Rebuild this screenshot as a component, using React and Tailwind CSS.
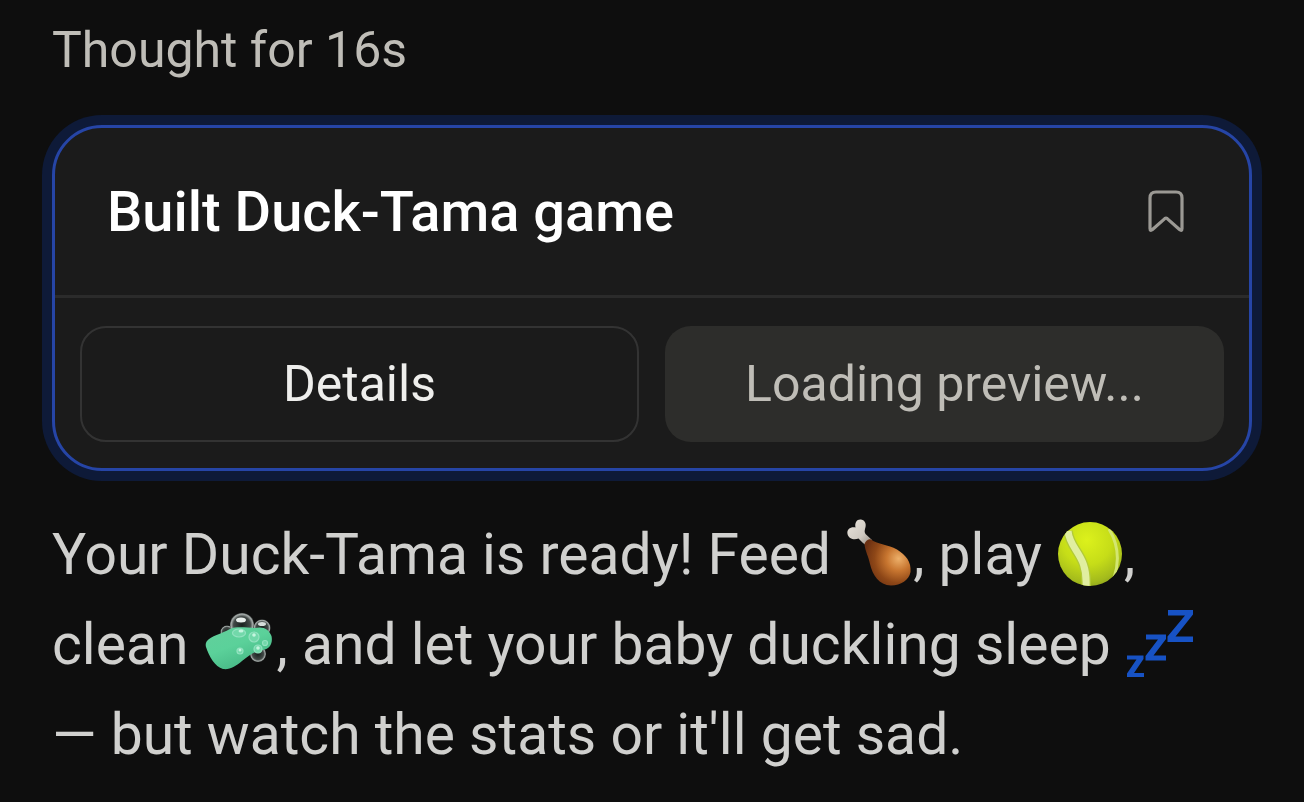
import React from "react";

function PoultryLeg() {
  return (
    <svg role="img" aria-label="Poultry leg" viewBox="0 0 68 70" className="inline-block h-[70px] w-[68px] align-[-14px]">
      <defs>
        <radialGradient id="meat" cx="0.74" cy="0.42" r="0.75">
          <stop offset="0" stopColor="#edb06a" />
          <stop offset="0.35" stopColor="#c87630" />
          <stop offset="0.7" stopColor="#8e4717" />
          <stop offset="1" stopColor="#6b3012" />
        </radialGradient>
        <linearGradient id="bone" x1="0" y1="0" x2="1" y2="1">
          <stop offset="0" stopColor="#e9e4dc" />
          <stop offset="0.6" stopColor="#cfc9c1" />
          <stop offset="1" stopColor="#8e857c" />
        </linearGradient>
      </defs>
      <path d="M18 25 L13.500 20.500 C9 22.500 3.500 20.500 2.500 16 C1.500 11 6 8.500 10.500 9.500 C9.500 4.500 12 1 16 1.500 C21 2.500 21.500 7 20 11 C19.500 13 19.500 14.500 20.500 16 L27 22 L22 28 Z" fill="url(#bone)" />
      <path d="M19.500 26 C20.500 23 23 20.500 26 21.500 C33 26.500 43 26.500 52 31.500 C61 37 66.500 44 65.500 54 C64 62 56 67.500 46 67.500 C34 67 27.500 57 25 46 C23.500 38 20 33 19.500 26 Z" fill="url(#meat)" />
    </svg>
  );
}

function TennisBall() {
  return (
    <svg role="img" aria-label="Tennis ball" viewBox="0 0 68 70" className="inline-block h-[70px] w-[68px] align-[-14px]">
      <defs>
        <radialGradient id="felt" cx="0.45" cy="0.28" r="0.78">
          <stop offset="0" stopColor="#dcf11c" />
          <stop offset="0.5" stopColor="#c6dd18" />
          <stop offset="0.85" stopColor="#a3ba1c" />
          <stop offset="1" stopColor="#8a9f1c" />
        </radialGradient>
        <clipPath id="ballEdge"><circle cx="34" cy="36" r="32" /></clipPath>
      </defs>
      <circle cx="34" cy="36" r="32" fill="url(#felt)" />
      <g clipPath="url(#ballEdge)" fill="none">
        <path d="M12 13 C14 33 32 36 30 69" stroke="#b2ca38" strokeWidth="9.500" />
        <path d="M12 13 C14 33 32 36 30 69" stroke="#e0eea0" strokeWidth="7" />
        <path d="M53 11 C62 26 64 42 58 60" stroke="#d3e670" strokeWidth="3" />
      </g>
    </svg>
  );
}

function Soap() {
  return (
    <svg role="img" aria-label="Soap" viewBox="0 0 74 70" className="inline-block h-[70px] w-[74px] align-[-14px]">
      <defs>
        <linearGradient id="bar" x1="0" y1="0" x2="0.6" y2="1">
          <stop offset="0" stopColor="#63cf9c" />
          <stop offset="0.5" stopColor="#5bd19a" />
          <stop offset="1" stopColor="#45b684" />
        </linearGradient>
        <radialGradient id="bubble" cx="0.5" cy="0.5" r="0.5">
          <stop offset="0" stopColor="#18201d" />
          <stop offset="0.7" stopColor="#424947" />
          <stop offset="0.9" stopColor="#a4aaa8" />
          <stop offset="1" stopColor="#606664" />
        </radialGradient>
      </defs>
      <circle cx="24" cy="24" r="6.500" fill="url(#bubble)" />
      <circle cx="39" cy="17" r="12" fill="url(#bubble)" />
      <circle cx="59" cy="20" r="8.500" fill="url(#bubble)" />
      <circle cx="55" cy="46" r="8" fill="url(#bubble)" />
      <ellipse cx="38" cy="12" rx="5" ry="2.500" fill="#e8eeeb" />
      <ellipse cx="59" cy="16" rx="4" ry="2" fill="#d7dedb" />
      <path d="M4 33 C8 28 18 26 27 21 C34 18 44 20 52 20 C60 18 66 21 68.500 28 C70 35 67 41 60 42 C51 43 46 48 39 53 C33 58 27 62 20 61 C12 59 6 48 3 39 C2.300 36.500 3 34.500 4 33 Z" fill="url(#bar)" />
      <g fill="#72d8aa" stroke="#93e2c0" strokeWidth="1.200">
        <ellipse cx="36" cy="25" rx="6.500" ry="4" />
        <circle cx="51" cy="29" r="5" />
        <circle cx="62" cy="35" r="2.500" />
        <circle cx="37" cy="43" r="3" />
        <circle cx="55" cy="41" r="4" />
      </g>
      <g fill="#c4f5df">
        <ellipse cx="38" cy="23" rx="2.500" ry="1.500" />
        <circle cx="51" cy="27" r="1.800" />
        <circle cx="37" cy="42" r="1.500" />
        <circle cx="55" cy="40" r="1.800" />
      </g>
    </svg>
  );
}

function Sleep() {
  return (
    <svg role="img" aria-label="Sleeping" viewBox="0 0 70 70" className="inline-block h-[70px] w-[70px] align-[-14px]">
      <g fill="#1752c4">
        <path d="M43 2 H68 V6.500 L50.500 28.500 H68 V34 H42.500 V28.500 L60 7.500 H43 Z" />
        <path d="M21 26.500 H41 V31 L28.500 47.500 H41 V52.500 H20.500 V48 L33 31.500 H21 Z" />
        <path d="M2 47.500 H18.500 V51 L9 65 H19 V69 H2 V65.500 L11.500 51.500 H2 Z" />
      </g>
    </svg>
  );
}

export default function App() {
  return (
    <main className="min-h-screen bg-[#0e0e0e] px-[52px] pt-4 pb-4 font-['Roboto','Liberation_Sans',sans-serif] text-[#d0d0ce]">
      <p className="text-[50px] leading-[68px] text-[#bfbdb7]">Thought for 16s</p>

      <section className="mt-[41px] rounded-[50px] border-3 border-[#2645a6] bg-[#1b1b1b] ring-10 ring-[#0e1a38]">
        <header className="flex h-[170px] items-center justify-between border-b-3 border-[#2b2b2b] pr-[65px] pl-[52px]">
          <h2 className="text-[56px] leading-[72px] font-medium text-white">Built Duck-Tama game</h2>
          <button type="button" aria-label="Bookmark">
            <svg viewBox="0 0 36 44" className="block h-[44px] w-[36px]" fill="none" stroke="#9b9994" strokeWidth="3.200" strokeLinejoin="round">
              <path d="M2 38.500 V8 Q2 2 8 2 H28 Q34 2 34 8 V38.500 Q34 41.500 31.500 39.500 L19.200 28.600 Q18 27.600 16.800 28.600 L4.500 39.500 Q2 41.500 2 38.500 Z" />
            </svg>
          </button>
        </header>
        <div className="grid grid-cols-2 gap-[26px] px-[25px] pt-7 pb-[26px] text-[50px] leading-[68px]">
          <button type="button" className="h-[116px] rounded-[26px] border-2 border-[#333333] text-[#eeeeec]">Details</button>
          <button type="button" className="h-[116px] rounded-[26px] bg-[#2d2d2b] text-[#bfbdb7]">Loading preview...</button>
        </div>
      </section>

      <p className="mt-[39px] text-[57px] leading-[90px] whitespace-nowrap">
        <span className="block">Your Duck-Tama is ready! Feed <PoultryLeg />, play <TennisBall />,</span>
        <span className="block">clean <Soap />, and let your baby duckling sleep <Sleep /></span>
        <span className="block">— but watch the stats or it'll get sad.</span>
      </p>
    </main>
  );
}
